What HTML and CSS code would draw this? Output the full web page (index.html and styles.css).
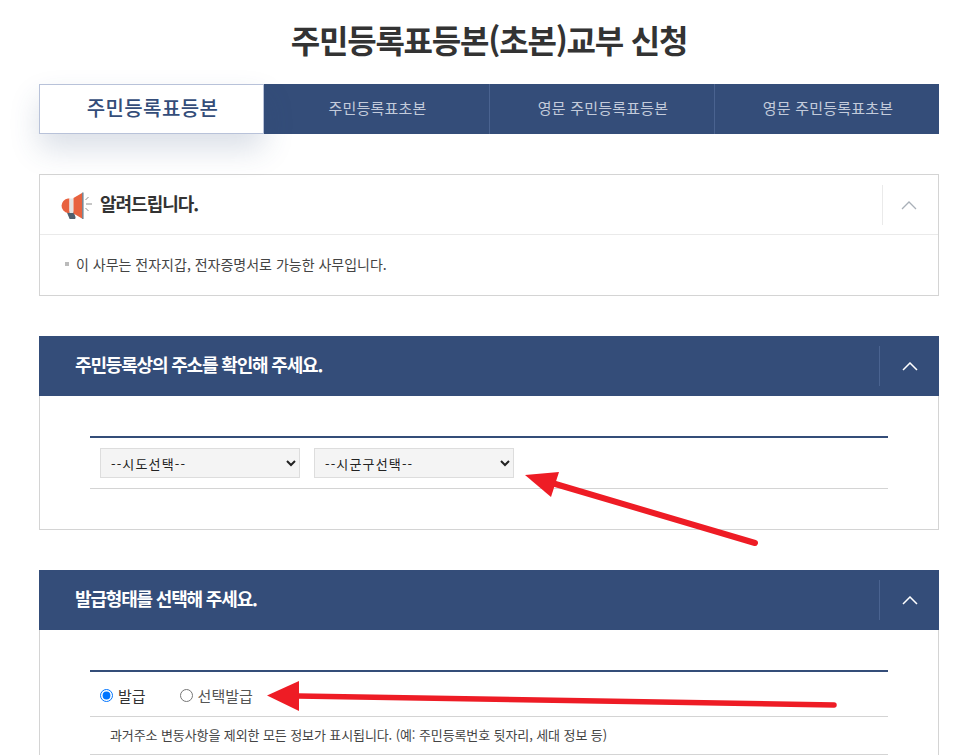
FILE: index.html
```html
<!DOCTYPE html>
<html lang="ko">
<head>
<meta charset="utf-8">
<title>주민등록표등본(초본)교부 신청</title>
<link rel="stylesheet" href="styles.css">
</head>
<body>
<main class="page">
  <h1 class="title">주민등록표등본(초본)교부 신청</h1>
  <nav class="tabs">
    <a class="tab tab-active">주민등록표등본</a>
    <a class="tab">주민등록표초본</a>
    <a class="tab">영문 주민등록표등본</a>
    <a class="tab">영문 주민등록표초본</a>
  </nav>

  <section class="notice">
    <header class="notice-head">
      <svg class="mega" width="34" height="28" viewBox="60 190.500 34 28">
        <path d="M66.500 211h7l2 5.500q.3 2.500-2 2.500h-2.500q-1.500 0-2-2z" fill="#4f5f6e"/>
        <path d="M68 198h1.500v14.500H68a7.300 7.300 0 0 1 0-14.500z" fill="#e8623f"/>
        <path d="M69.500 198h4v14.500h-4z" fill="#e4e4e4"/>
        <path d="M73.500 197.500l8.500-5v25.500l-8.500-5z" fill="#e8623f"/>
        <path d="M82 192h1.600v26.500H82z" fill="#7a8794"/>
        <path d="M85.500 199.500l3-3M86 203.500h6M85.500 207.500l3 3" stroke="#8e8e8e" stroke-width="1" fill="none"/>
      </svg>
      <h2 class="notice-title">알려드립니다.</h2>
      <span class="notice-toggle"><svg width="16" height="9" viewBox="0 0 16 9"><path d="M1 8l7-7 7 7" fill="none" stroke="#a9b0b8" stroke-width="1.300"/></svg></span>
    </header>
    <div class="notice-body"><span class="bullet"></span>이 사무는 전자지갑, 전자증명서로 가능한 사무입니다.</div>
  </section>

  <section class="panel">
    <header class="panel-head">
      <h2 class="panel-title">주민등록상의 주소를 확인해 주세요.</h2>
      <span class="panel-toggle"><svg width="16" height="9" viewBox="0 0 16 9"><path d="M1 8l7-7 7 7" fill="none" stroke="#fff" stroke-width="1.500"/></svg></span>
    </header>
    <div class="panel-body">
      <div class="form-table">
        <div class="form-row form-row-select">
          <select class="sel"><option>--시도선택--</option></select>
          <select class="sel"><option>--시군구선택--</option></select>
        </div>
      </div>
    </div>
  </section>

  <section class="panel panel-open">
    <header class="panel-head">
      <h2 class="panel-title">발급형태를 선택해 주세요.</h2>
      <span class="panel-toggle"><svg width="16" height="9" viewBox="0 0 16 9"><path d="M1 8l7-7 7 7" fill="none" stroke="#fff" stroke-width="1.500"/></svg></span>
    </header>
    <div class="panel-body">
      <div class="form-table">
        <div class="form-row form-row-radio">
          <label class="radio radio-on"><input type="radio" name="kind" checked>발급</label>
          <label class="radio"><input type="radio" name="kind">선택발급</label>
        </div>
        <div class="form-row form-row-note">과거주소 변동사항을 제외한 모든 정보가 표시됩니다. (예: 주민등록번호 뒷자리, 세대 정보 등)</div>
      </div>
    </div>
  </section>
</main>

<svg class="arrows" width="961" height="755" viewBox="0 0 961 755">
  <path d="M552 483L755 543" stroke="#ee1c25" stroke-width="6" stroke-linecap="round" fill="none"/>
  <path d="M525 475L559 472L551 497z" fill="#ee1c25"/>
  <path d="M298 696L834 705" stroke="#ee1c25" stroke-width="5.500" stroke-linecap="round" fill="none"/>
  <path d="M267 695.500L299 681V711z" fill="#ee1c25"/>
</svg>
</body>
</html>
```
FILE: styles.css
```css
* { box-sizing: border-box; }
html, body { margin: 0; height: 755px; overflow: hidden; background: #fff; }
body {
  position: relative;
  font-family: "Noto Sans CJK KR", "Noto Sans", sans-serif;
  color: #333;
}
.page { width: 900px; margin-left: 39px; padding-top: 15px; }
.title {
  margin: 0 0 21px;
  height: 48px;
  line-height: 48px;
  text-align: center;
  font-size: 32px;
  font-weight: 700;
  letter-spacing: -1.2px;
  color: #333;
}
.tabs { display: flex; height: 50px; background: #344d79; }
.tab {
  flex: 0 0 225px;
  display: flex;
  align-items: center;
  justify-content: center;
  padding: 0 0 3px 2px;
  font-size: 15px;
  letter-spacing: .2px;
  color: #c3cbdb;
  border-left: 1px solid #4a6390;
}
.tab:nth-child(2) { border-left: 0; }
.tab-active {
  background: #fff;
  color: #344d79;
  font-size: 20px;
  font-weight: 500;
  letter-spacing: .4px;
  border: 1px solid #b8c2d9;
  box-shadow: 0 15px 30px rgba(52, 77, 121, .18);
}
.notice {
  margin-top: 40px;
  height: 122px;
  border: 1px solid #d4d4d4;
}
.notice-head {
  display: flex;
  align-items: center;
  height: 60px;
  padding-left: 20px;
  border-bottom: 1px solid #eaeaea;
}
.mega { flex: none; margin-right: 6px; }
.notice-title {
  margin: 0 0 4px;
  flex: 1;
  font-size: 18px;
  font-weight: 700;
  letter-spacing: -1px;
  color: #333;
}
.notice-toggle {
  width: 56px;
  height: 40px;
  padding: 2px 3px 0 0;
  display: flex;
  align-items: center;
  justify-content: center;
  border-left: 1px solid #eaeaea;
}
.notice-body {
  display: flex;
  align-items: center;
  height: 60px;
  padding: 0 0 3px 25px;
  font-size: 14px;
  color: #444;
}
.bullet {
  width: 4px;
  height: 4px;
  margin-right: 7px;
  background: #bbb;
}
.panel { margin-top: 40px; }
.panel-head {
  display: flex;
  align-items: center;
  height: 60px;
  padding-left: 36px;
  background: #344d79;
}
.panel-title {
  margin: 0 0 4px;
  flex: 1;
  font-size: 18px;
  font-weight: 700;
  letter-spacing: -1.170px;
  color: #fff;
}
.panel-toggle {
  width: 60px;
  height: 40px;
  display: flex;
  align-items: center;
  justify-content: center;
  border-left: 1px solid #4a6390;
}
.panel-body {
  height: 134px;
  padding: 40px 50px 0;
  border: 1px solid #d4d4d4;
  border-top: 0;
}
.panel-open .panel-body { height: 125px; border-bottom: 0; }
.form-table { border-top: 2px solid #344d79; }
.form-row { border-bottom: 1px solid #d4d4d4; }
.form-row-select {
  display: flex;
  gap: 14px;
  height: 51px;
  padding: 10px 10px 0;
}
.sel {
  width: 200px;
  height: 30px;
  padding: 0 6px;
  font-family: "Noto Sans CJK KR", "Noto Sans", sans-serif;
  font-size: 13px;
  letter-spacing: 1.150px;
  color: #222;
  background: #f4f4f4;
  border: 1px solid #ddd;
}
.form-row-radio {
  display: flex;
  align-items: center;
  gap: 34px;
  height: 45px;
  padding: 2px 0 0 10px;
}
.radio { display: flex; align-items: center; font-size: 15px; color: #555; }
.radio-on { color: #333; }
.radio input { margin: 0 5px 0 0; width: 13px; height: 13px; }
.form-row-note {
  height: 38px;
  line-height: 35px;
  padding-left: 20px;
  font-size: 13px;
  letter-spacing: -.1px;
  color: #444;
}
.arrows { position: absolute; left: 0; top: 0; pointer-events: none; }
```
